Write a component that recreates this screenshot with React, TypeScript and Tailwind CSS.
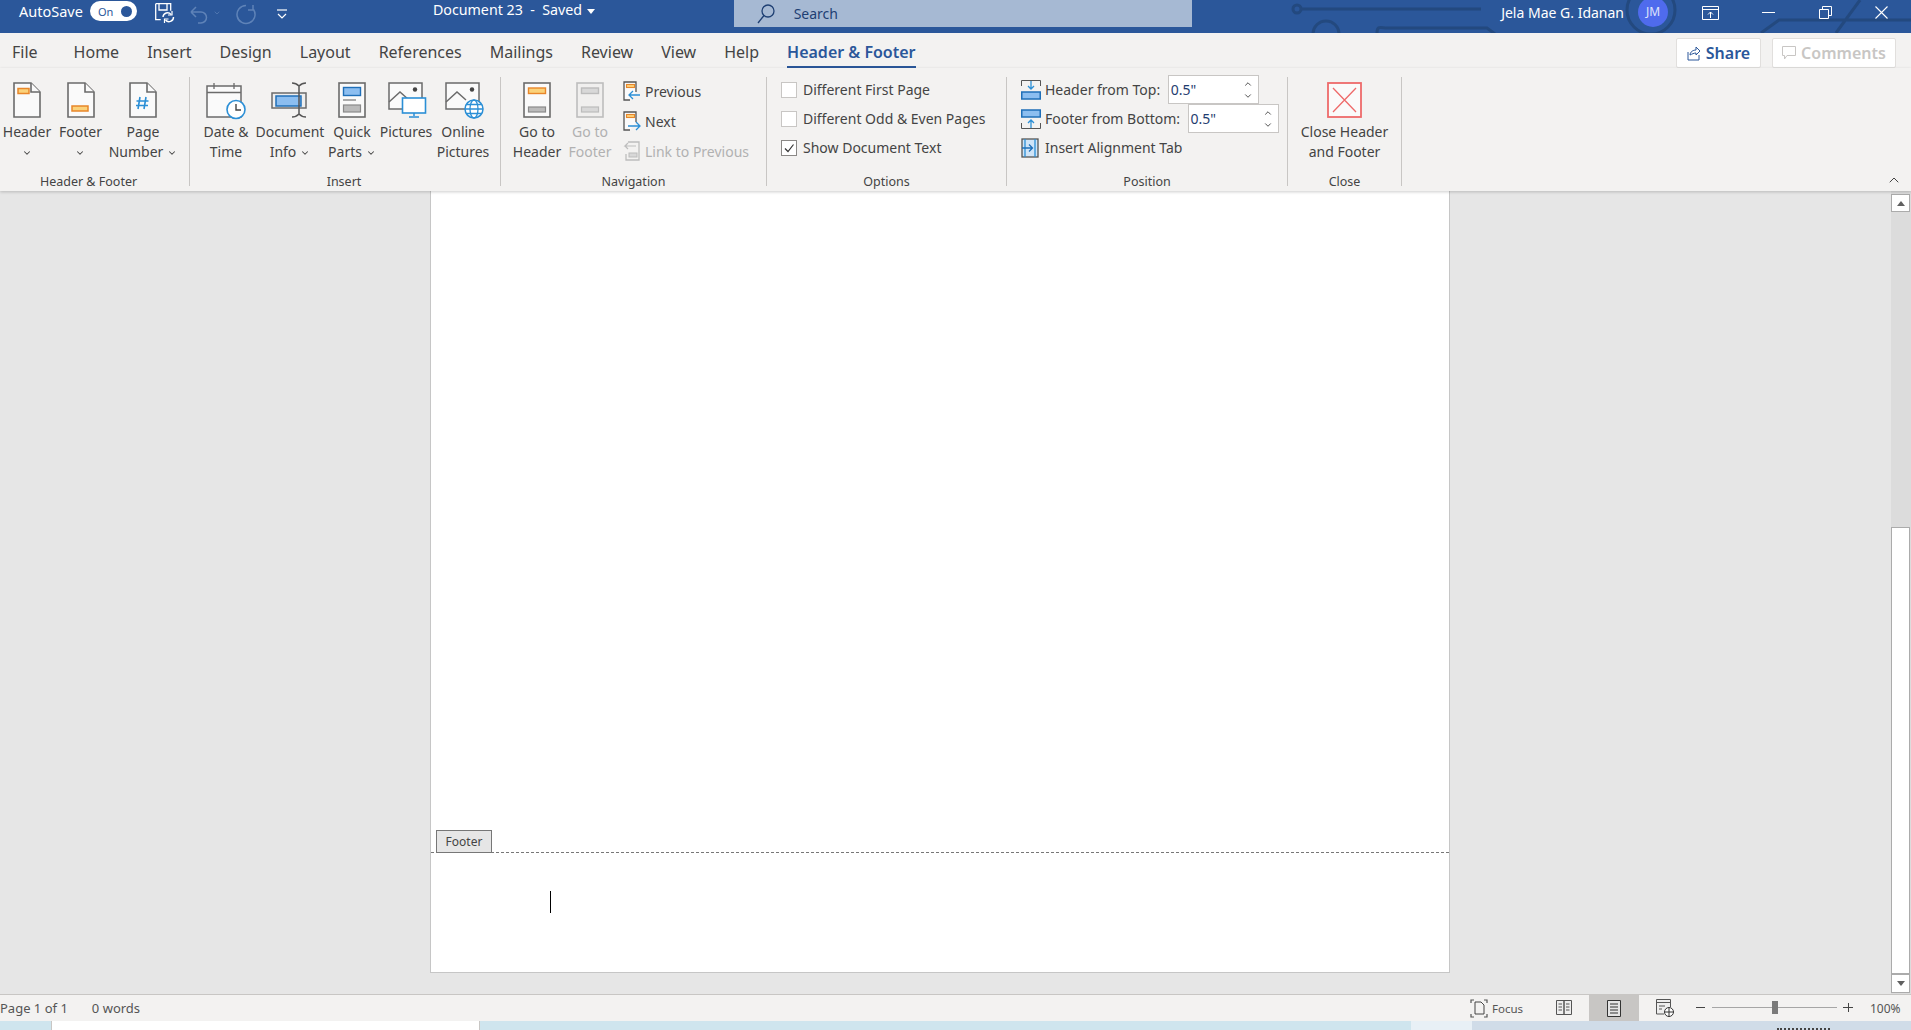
import type { ReactNode } from "react";
import { ChevronDown, ChevronUp } from "lucide-react";

const tabs = ["Home", "Insert", "Design", "Layout", "References", "Mailings", "Review", "View", "Help"];

function Chev({ className = "" }: { className?: string }) {
  return <ChevronDown className={`inline-block w-[10px] h-[10px] text-[#444] ${className}`} strokeWidth={2.5} />;
}

// page shaped icon with a folded corner
function PageIcon({ children }: { children?: ReactNode }) {
  return (
    <svg width="28" height="36" viewBox="0 0 28 36">
      <path d="M1 1h17l9 9v25H1z" fill="#fafafa" stroke="#6b6b6b" strokeWidth="1.6" />
      <path d="M18 1v9h9" fill="#fafafa" stroke="#6b6b6b" strokeWidth="1.6" />
      {children}
    </svg>
  );
}

function HeaderIcon() {
  return (
    <PageIcon>
      <rect x="5" y="6.5" width="11" height="5" fill="#fbd27a" stroke="#e8862a" strokeWidth="1.5" />
    </PageIcon>
  );
}

function FooterIcon() {
  return (
    <PageIcon>
      <rect x="5" y="24" width="16" height="5" fill="#fbd27a" stroke="#e8862a" strokeWidth="1.5" />
    </PageIcon>
  );
}

function NumberIcon() {
  return (
    <PageIcon>
      <path d="M11 15l-2 12M17 15l-2 12M7.5 19h12M7 23.5h12" stroke="#2b8fd6" strokeWidth="1.6" fill="none" />
    </PageIcon>
  );
}

function DateIcon() {
  return (
    <svg width="40" height="38" viewBox="0 0 40 38">
      <path d="M1 4h34v31H1z" fill="#fafafa" stroke="#6b6b6b" strokeWidth="1.5" />
      <path d="M1 10.5h34M8 1v6M28 1v6" stroke="#6b6b6b" strokeWidth="1.3" fill="none" />
      <circle cx="30" cy="27.5" r="9" fill="#fff" stroke="#2b8fd6" strokeWidth="1.6" />
      <path d="M30 22v6h5" stroke="#444" strokeWidth="1.4" fill="none" />
    </svg>
  );
}

function DocInfoIcon() {
  return (
    <svg width="38" height="36" viewBox="0 0 38 36">
      <rect x="1" y="11" width="34" height="15" fill="#eee" stroke="#6b6b6b" strokeWidth="1.5" />
      <rect x="5" y="14" width="25" height="10" fill="#8cbef0" stroke="#1f6fb8" strokeWidth="1.5" />
      <path d="M21 1c4 0 5 1 7 3 2-2 3-3 7-3M28 4v28M21 35c4 0 5-1 7-3 2 2 3 3 7 3" stroke="#555" strokeWidth="1.5" fill="#f3f2f1" />
    </svg>
  );
}

function QuickPartsIcon() {
  return (
    <svg width="28" height="36" viewBox="0 0 28 36">
      <rect x="1" y="1" width="26" height="34" fill="#fafafa" stroke="#6b6b6b" strokeWidth="1.6" />
      <rect x="5.5" y="5.5" width="17" height="8" fill="#8cbef0" stroke="#1f6fb8" strokeWidth="1.4" />
      <path d="M5 18h13" stroke="#888" strokeWidth="1.4" />
      <rect x="5.5" y="23" width="17" height="7" fill="#bbb" stroke="#8a8a8a" strokeWidth="1.2" />
    </svg>
  );
}

function PictureBase() {
  return (
    <>
      <path d="M1 1h33v26H1z" fill="#fafafa" stroke="#6b6b6b" strokeWidth="1.5" />
      <path d="M1 20l11-10 9 8" fill="none" stroke="#6b6b6b" strokeWidth="1.5" />
      <circle cx="27" cy="7.5" r="2.2" fill="#444" />
    </>
  );
}

function PicturesIcon() {
  return (
    <svg width="40" height="36" viewBox="0 0 40 36">
      <PictureBase />
      <rect x="14.5" y="16" width="23" height="15" fill="#fff" stroke="#2b8fd6" strokeWidth="1.6" />
      <path d="M26 31v3M21 35h10" stroke="#2b8fd6" strokeWidth="1.5" />
    </svg>
  );
}

function OnlineIcon() {
  return (
    <svg width="40" height="38" viewBox="0 0 40 38">
      <PictureBase />
      <circle cx="29" cy="27" r="9" fill="#fff" stroke="#2b8fd6" strokeWidth="1.5" />
      <ellipse cx="29" cy="27" rx="4" ry="9" fill="none" stroke="#2b8fd6" strokeWidth="1.3" />
      <path d="M20 27h18M21.5 22.5h15M21.5 31.5h15" stroke="#2b8fd6" strokeWidth="1.3" />
    </svg>
  );
}

function GoToIcon({ active }: { active: boolean }) {
  return (
    <svg width="28" height="36" viewBox="0 0 28 36">
      <rect x="1" y="1" width="26" height="34" fill={active ? "#fafafa" : "#f0efee"} stroke={active ? "#6b6b6b" : "#bdbdbd"} strokeWidth="1.6" />
      <rect x="5.5" y="6" width="17" height="5.5" fill={active ? "#fbd27a" : "#d8d8d8"} stroke={active ? "#e8862a" : "#bcbcbc"} strokeWidth="1.4" />
      <rect x="5.5" y="25" width="17" height="5" fill={active ? "#bbb" : "#d8d8d8"} stroke={active ? "#8a8a8a" : "#bcbcbc"} strokeWidth="1.2" />
    </svg>
  );
}

function NavIcon({ back }: { back?: boolean }) {
  return (
    <svg width="18" height="20" viewBox="0 0 18 20">
      <path d="M13 11V1H1v18h6" fill="#fafafa" stroke="#555" strokeWidth="1.3" />
      <rect x="3.5" y="3.5" width="8" height="3" fill="#fbd27a" stroke="#e8862a" strokeWidth="1.1" />
      {back ? (
        <path d="M17 14H6M10 10l-4 4 4 4" fill="none" stroke="#2b8fd6" strokeWidth="1.3" />
      ) : (
        <path d="M5 15h12M13 11l4 4-4 4" fill="none" stroke="#2b8fd6" strokeWidth="1.3" />
      )}
    </svg>
  );
}

function LinkIcon() {
  return (
    <svg width="18" height="20" viewBox="0 0 18 20">
      <path d="M5 1h11v18H3v-6" fill="none" stroke="#bdbdbd" strokeWidth="1.3" />
      <path d="M13 5H2l3-3M2 5l3 3" fill="none" stroke="#bdbdbd" strokeWidth="1.2" />
      <rect x="6" y="12" width="8" height="4" fill="#d8d8d8" stroke="#bcbcbc" />
    </svg>
  );
}

function PositionIcon({ kind }: { kind: "top" | "bottom" | "tab" }) {
  if (kind === "top") {
    return (
      <svg width="20" height="20" viewBox="0 0 20 20">
        <path d="M.5 6V.5h19V6" fill="none" stroke="#555" />
        <path d="M10 1v8M7 6l3 3 3-3" fill="none" stroke="#2b8fd6" strokeWidth="1.3" />
        <rect x=".75" y="12" width="18.5" height="7" fill="#8cbef0" stroke="#1f6fb8" strokeWidth="1.5" />
      </svg>
    );
  }
  if (kind === "bottom") {
    return (
      <svg width="20" height="20" viewBox="0 0 20 20">
        <rect x=".75" y="1" width="18.5" height="7" fill="#8cbef0" stroke="#1f6fb8" strokeWidth="1.5" />
        <path d="M.5 14v5.5h19V14" fill="none" stroke="#555" />
        <path d="M10 19v-8M7 14l3-3 3 3" fill="none" stroke="#2b8fd6" strokeWidth="1.3" />
      </svg>
    );
  }
  return (
    <svg width="18" height="20" viewBox="0 0 18 20">
      <rect x="1" y="1" width="16" height="18" fill="#cfe4f7" stroke="#555" strokeWidth="1.3" />
      <path d="M4 1v18M14 1v18" stroke="#2b8fd6" strokeWidth="1.3" />
      <path d="M1 10h10M8 6.5l3.5 3.5L8 13.500" fill="none" stroke="#1f6fb8" strokeWidth="1.3" />
    </svg>
  );
}

function BigButton({
  icon,
  lines,
  width,
  chevron,
  chevronBelow,
  disabled,
  iconShift = "",
}: {
  icon: ReactNode;
  lines: string[];
  width: string;
  chevron?: boolean;
  chevronBelow?: boolean;
  disabled?: boolean;
  iconShift?: string;
}) {
  return (
    <div className={`flex flex-col items-center shrink-0 ${width}`}>
      <div className={`h-[39px] pt-[2px] flex items-start justify-center ${iconShift}`}>{icon}</div>
      <div className={`mt-[3px] text-center leading-[20px] whitespace-nowrap ${disabled ? "text-[#b1b1b1]" : "text-[#444]"}`}>
        {lines.map((l, i) => (
          <div key={i}>
            {l}
            {chevron && i === lines.length - 1 && <Chev className="ml-1" />}
          </div>
        ))}
        {chevronBelow && <Chev />}
      </div>
    </div>
  );
}

function Group({
  label,
  width,
  className = "",
  labelClass = "",
  children,
}: {
  label: string;
  width: string;
  className?: string;
  labelClass?: string;
  children: ReactNode;
}) {
  return (
    <div className={`relative shrink-0 h-[109px] border-r border-[#c8c6c4] flex flex-col ${width}`}>
      <div className={`flex-1 flex ${className}`}>{children}</div>
      <div className={`text-center text-[12.5px] leading-[16px] text-[#444] -mb-[4px] ${labelClass}`}>{label}</div>
    </div>
  );
}

function SmallLink({ icon, label, disabled }: { icon: ReactNode; label: string; disabled?: boolean }) {
  return (
    <div className="flex items-center h-[30px]">
      <div className="w-[22px] flex justify-start">{icon}</div>
      <span className={disabled ? "text-[#b1b1b1]" : "text-[#444]"}>{label}</span>
    </div>
  );
}

function Option({ label, checked }: { label: string; checked?: boolean }) {
  return (
    <div className="flex items-center h-[29px]">
      <div className={`w-4 h-4 border flex items-center justify-center mr-[6px] bg-white ${checked ? "border-[#8a8886]" : "border-[#c8c6c4]"}`}>
        {checked && (
          <svg width="10" height="10" viewBox="0 0 10 10">
            <path d="M1 5.5l3 3 5.500-7" fill="none" stroke="#333" strokeWidth="1.2" />
          </svg>
        )}
      </div>
      <span className="text-[#444]">{label}</span>
    </div>
  );
}

function Spinner() {
  return (
    <div className="ml-[7.500px] w-[91px] h-[29px] bg-white border border-[#c8c6c4] flex items-center justify-between pl-[2px] pr-[5px]">
      <span className="text-[#1f3d6f]">0.5"</span>
      <div className="flex flex-col">
        <ChevronUp className="w-[10px] h-[10px] text-[#333]" strokeWidth={2} />
        <ChevronDown className="w-[10px] h-[10px] text-[#333] mt-[2px]" strokeWidth={2} />
      </div>
    </div>
  );
}

function TitleBar() {
  return (
    <div className="relative h-[33px] bg-[#2b579a] text-white flex items-start shrink-0 overflow-hidden">
      {/* circuit pattern behind the window controls */}
      <svg className="absolute right-0 top-0" width="630" height="33" viewBox="0 0 630 33">
        <g fill="none" stroke="#23497f" strokeWidth="3">
          <circle cx="16" cy="9" r="4" />
          <path d="M20 9h180" />
          <circle cx="45" cy="34" r="13" />
          <path d="M96 33c0-8 4-5 10-5h100l8 6" />
          <circle cx="370" cy="10" r="24" />
          <path d="M480 33l18-13h132M555 33l24-33" />
        </g>
      </svg>
      <span className="relative ml-[19px] text-[14.500px] leading-[22px]">AutoSave</span>
      <div className="relative ml-[7px] mt-[1px] w-[47px] h-[20px] rounded-full bg-white flex items-center justify-between pl-[8px] pr-[5px]">
        <span className="text-[11px] leading-none text-[#2b579a]">On</span>
        <span className="w-[11px] h-[11px] rounded-full bg-[#2b579a]" />
      </div>
      <svg className="relative ml-[18px] mt-[3px]" width="20" height="21" viewBox="0 0 20 21">
        <path d="M.7.7h15v7M.7.7v16h5M4 1v6h8V1M4 19" fill="none" stroke="#fff" strokeWidth="1.3" />
        <path d="M8 14a4.500 4.500 0 0 1 8-2.500M18.500 14a4.500 4.500 0 0 1-8 3" fill="none" stroke="#fff" strokeWidth="1.4" />
        <path d="M17 8v4h-4M9.500 20v-4h4" fill="none" stroke="#fff" strokeWidth="1.2" />
      </svg>
      <svg className="relative ml-[15px] mt-[5px]" width="18" height="19" viewBox="0 0 18 19">
        <path d="M1 7h10a5.500 5.500 0 0 1 0 11H8M1 7l5-5M1 7l5 5" fill="none" stroke="#5f83b8" strokeWidth="1.5" />
      </svg>
      <ChevronDown className="relative ml-[5px] mt-[9px] w-[8px] h-[8px] text-[#5f83b8]" strokeWidth={2} />
      <svg className="relative ml-[15px] mt-[4px]" width="20" height="21" viewBox="0 0 20 21">
        <path d="M10 1.500a9 9 0 1 1-7.500 4M3 1v5h5" fill="none" stroke="#5f83b8" strokeWidth="1.5" transform="matrix(-1 0 0 1 20 0)" />
      </svg>
      <svg className="relative ml-[21px] mt-[9px]" width="10" height="11" viewBox="0 0 10 11">
        <path d="M0 1h10" stroke="#fff" strokeWidth="1.200" />
        <path d="M1 5l4 4 4-4" fill="none" stroke="#fff" strokeWidth="1.200" />
      </svg>
      <span className="relative ml-[146px] text-[14.250px] leading-[20px] whitespace-pre">Document 23  -  Saved</span>
      <svg className="relative ml-[5px] mt-[9px]" width="8" height="5" viewBox="0 0 8 5">
        <path d="M0 0h8L4 5z" fill="#fff" />
      </svg>
      <div className="relative ml-[138.500px] w-[458px] h-[27px] bg-[#a6b9d3] flex items-center text-[#1e3f73]">
        <svg className="ml-[23px]" width="18" height="20" viewBox="0 0 18 20">
          <circle cx="11" cy="7" r="6" fill="none" stroke="#1e3f73" strokeWidth="1.300" />
          <path d="M7 11.500L1 19" stroke="#1e3f73" strokeWidth="1.300" />
        </svg>
        <span className="ml-[19px] text-[14px]">Search</span>
      </div>
      <span className="relative ml-[309.500px] text-[14px] leading-[25px] whitespace-nowrap">Jela Mae G. Idanan</span>
      <div className="absolute left-[1638px] top-[-3px] w-[30px] h-[30px] rounded-full bg-[#4f6bed] text-[#dfe4fb] text-[12px] flex items-center justify-center">JM</div>
      <svg className="absolute left-[1702px] top-[6px]" width="17" height="14" viewBox="0 0 17 14">
        <path d="M.5.500h16v13H.5zM.5 3.500h16" fill="none" stroke="#fff" />
        <path d="M8.500 12V6M6 8.500l2.500-2.500 2.500 2.500" fill="none" stroke="#fff" />
      </svg>
      <div className="absolute left-[1762px] top-[12px] w-[13px] h-[1px] bg-white" />
      <svg className="absolute left-[1819px] top-[6px]" width="13" height="13" viewBox="0 0 13 13">
        <path d="M.5 3.500h9v9h-9zM3.500 3.500v-3h9v9h-3" fill="none" stroke="#fff" />
      </svg>
      <svg className="absolute left-[1875px] top-[6px]" width="13" height="13" viewBox="0 0 13 13">
        <path d="M.5.500l12 12M12.500.500l-12 12" stroke="#fff" strokeWidth="1.100" />
      </svg>
    </div>
  );
}

function TabsRow() {
  return (
    <div className="relative h-[35px] flex items-start text-[16px] text-[#444] pl-[12px] pt-[8px] leading-[22px]">
      <span className="mr-[36px]">File</span>
      <div className="flex gap-[28px]">
        {tabs.map((t) => (
          <span key={t}>{t}</span>
        ))}
        <span className="relative font-semibold text-[#2b579a]">
          Header &amp; Footer
          <span className="absolute left-0 right-0 top-[25px] h-[4px] bg-[#2b579a]" />
        </span>
      </div>
      <div className="absolute left-[1676px] top-[5px] w-[85px] h-[30px] bg-white border border-[#e1dfdd] rounded-[2px] flex items-center justify-center font-semibold text-[#2b579a]">
        <svg className="mr-[5px]" width="14" height="15" viewBox="0 0 14 15">
          <path d="M1 6v8h11V9M3 9c0-3 3-5 6-5V1l4 4-4 4V7C7 7 5 8 3 9z" fill="none" stroke="#2b579a" />
        </svg>
        Share
      </div>
      <div className="absolute left-[1772px] top-[5px] w-[124px] h-[30px] bg-white border border-[#e1dfdd] rounded-[2px] flex items-center justify-center font-semibold text-[#c8c6c4]">
        <svg className="mr-[5px]" width="14" height="14" viewBox="0 0 14 14">
          <path d="M.5.500h13v9H5L2.500 13V9.500h-2z" fill="none" stroke="#c8c6c4" />
        </svg>
        Comments
      </div>
    </div>
  );
}

function Ribbon() {
  return (
    <div className="relative h-[123px] bg-[#f3f2f1] text-[14px] shadow-[0_1px_3px_rgba(0,0,0,0.2)] z-10 shrink-0">
      <div className="flex pt-[9px]">
        <Group label="Header & Footer" width="w-[190px]" className="pt-[3px]" labelClass="pr-[12px]">
          <BigButton icon={<HeaderIcon />} lines={["Header"]} width="w-[54px]" chevronBelow />
          <BigButton icon={<FooterIcon />} lines={["Footer"]} width="w-[53px]" chevronBelow />
          <BigButton icon={<NumberIcon />} lines={["Page", "Number"]} width="w-[72px]" chevron />
        </Group>
        <Group label="Insert" width="w-[311px]" className="pt-[3px] pl-[10px]" labelClass="pr-[2px]">
          <BigButton icon={<DateIcon />} lines={["Date &", "Time"]} width="w-[52px]" />
          <BigButton icon={<DocInfoIcon />} lines={["Document", "Info"]} width="w-[76px]" chevron />
          <BigButton icon={<QuickPartsIcon />} lines={["Quick", "Parts"]} width="w-[48px]" chevron />
          <BigButton icon={<PicturesIcon />} lines={["Pictures"]} width="w-[60px]" iconShift="pl-[4px]" />
          <BigButton icon={<OnlineIcon />} lines={["Online", "Pictures"]} width="w-[54px]" iconShift="pl-[4px]" />
        </Group>
        <Group label="Navigation" width="w-[266px]" className="pt-[3px] pl-[12px]">
          <BigButton icon={<GoToIcon active />} lines={["Go to", "Header"]} width="w-[48px]" />
          <BigButton icon={<GoToIcon active={false} />} lines={["Go to", "Footer"]} width="w-[58px]" disabled />
          <div className="ml-[4px] -mt-[4px]">
            <SmallLink icon={<NavIcon back />} label="Previous" />
            <SmallLink icon={<NavIcon />} label="Next" />
            <SmallLink icon={<LinkIcon />} label="Link to Previous" disabled />
          </div>
        </Group>
        <Group label="Options" width="w-[240px]" className="pl-[14px] flex-col -mt-[2px]">
          <Option label="Different First Page" />
          <Option label="Different Odd & Even Pages" />
          <Option label="Show Document Text" checked />
        </Group>
        <Group label="Position" width="w-[281px]" className="pl-[14px] flex-col -mt-[2px]">
          <div className="flex items-center h-[29px]">
            <PositionIcon kind="top" />
            <span className="ml-[4px] text-[#444]">Header from Top:</span>
            <Spinner />
          </div>
          <div className="flex items-center h-[29px]">
            <PositionIcon kind="bottom" />
            <span className="ml-[4px] text-[#444]">Footer from Bottom:</span>
            <Spinner />
          </div>
          <div className="flex items-center h-[29px]">
            <PositionIcon kind="tab" />
            <span className="ml-[6px] text-[#444]">Insert Alignment Tab</span>
          </div>
        </Group>
        <Group label="Close" width="w-[114px]" className="pt-[3px] justify-center">
          <BigButton
            icon={
              <svg width="35" height="36" viewBox="0 0 35 36">
                <rect x="1" y="1" width="33" height="34" fill="#fafafa" stroke="#ee6a6a" strokeWidth="1.800" />
                <path d="M6 6l23 24M29 6L6 30" stroke="#ee6a6a" strokeWidth="1.300" />
              </svg>
            }
            lines={["Close Header", "and Footer"]}
            width="w-[100px]"
          />
        </Group>
      </div>
      <ChevronUp className="absolute left-[1886px] top-[104px] w-4 h-4 text-[#444]" strokeWidth={1.500} />
    </div>
  );
}

function DocArea() {
  return (
    <div className="flex-1 flex bg-[#e6e6e6] min-h-0">
      <div className="flex-1">
        <div className="relative ml-[430px] w-[1020px] h-[782px] bg-white border-x border-b border-[#c6c6c6]">
          <div className="absolute left-0 right-0 top-[661px] border-t border-dashed border-[#777]" />
          <div className="absolute left-[5px] top-[639px] w-[56px] h-[23px] bg-[#e6e6e6] border border-[#777] text-[12px] text-[#444] flex items-center justify-center">
            Footer
          </div>
          <div className="absolute left-[119px] top-[700px] w-[1px] h-[22px] bg-black" />
        </div>
      </div>
      <div className="w-[20px] pt-[3px] bg-[#dcdcdc] flex flex-col">
        <div className="h-[18px] w-[19px] bg-white border border-[#ababab] flex items-center justify-center">
          <span className="w-0 h-0 border-x-[4px] border-x-transparent border-b-[5px] border-b-[#606060]" />
        </div>
        <div className="flex-1 flex flex-col justify-end">
          <div className="h-[447px] w-[19px] bg-white border border-[#ababab]" />
        </div>
        <div className="h-[19px] w-[19px] mb-[1px] bg-white border border-[#ababab] flex items-center justify-center">
          <span className="w-0 h-0 border-x-[4px] border-x-transparent border-t-[5px] border-t-[#606060]" />
        </div>
      </div>
    </div>
  );
}

function StatusBar() {
  return (
    <div className="relative h-[27px] bg-[#f3f2f1] border-t border-[#c8c6c4] text-[13px] text-[#555] flex items-center pt-[1px] shrink-0">
      <span>Page 1 of 1</span>
      <span className="ml-[24px]">0 words</span>
      <svg className="absolute left-[1470px] top-[4px]" width="18" height="19" viewBox="0 0 18 19">
        <path d="M1 4V1h3M14 1h3v3M1 15v3h3M17 15v3h-3" fill="none" stroke="#555" strokeWidth="1.200" />
        <path d="M5 3h6l3 3v9H5z" fill="none" stroke="#444" />
      </svg>
      <span className="absolute left-[1492px] top-[5px] text-[11.500px]">Focus</span>
      <svg className="absolute left-[1556px] top-[4px]" width="16" height="17" viewBox="0 0 16 17">
        <path d="M.5 1.500h7.500v14H.5zM8 1.500h7.500v14H8z" fill="#eee" stroke="#555" />
        <path d="M2.500 5h3.500M2.500 8h3.500M2.500 11h3.500M10 5h3.500M10 8h3.500M10 11h3.500" stroke="#555" />
      </svg>
      <div className="absolute left-[1589px] top-0 w-[50px] h-[26px] bg-[#c8c6c4] flex items-center justify-center">
        <svg width="14" height="17" viewBox="0 0 14 17">
          <path d="M.5.500h13v16H.5z" fill="#e4e4e4" stroke="#333" />
          <path d="M3 4h8M3 7h8M3 10h8M3 13h8" stroke="#333" />
        </svg>
      </div>
      <svg className="absolute left-[1656px] top-[4px]" width="18" height="18" viewBox="0 0 18 18">
        <path d="M8 15H.5V.500h14V8M.5 3.500h14" fill="#eee" stroke="#555" />
        <path d="M3 7h6M3 10h3" stroke="#555" />
        <circle cx="13" cy="13" r="4.500" fill="#fff" stroke="#333" />
        <path d="M8.500 13h9M13 8.500v9" stroke="#333" />
      </svg>
      <div className="absolute left-[1696px] top-[12px] w-[9px] h-[1px] bg-[#444]" />
      <div className="absolute left-[1712px] top-[12px] w-[125px] h-[1px] bg-[#a6a6a6]" />
      <div className="absolute left-[1772px] top-[6px] w-[6px] h-[13px] bg-[#7a7a7a]" />
      <div className="absolute left-[1843px] top-[12px] w-[10px] h-[1px] bg-[#444]" />
      <div className="absolute left-[1847.500px] top-[8px] w-[1px] h-[9px] bg-[#444]" />
      <span className="absolute left-[1870px] top-[5px] text-[12px]">100%</span>
    </div>
  );
}

export default function App() {
  return (
    <div className="w-[1911px] h-[1030px] flex flex-col overflow-hidden bg-[#f3f2f1] font-['Noto_Sans',sans-serif]">
      <TitleBar />
      <TabsRow />
      <Ribbon />
      <DocArea />
      <StatusBar />
      {/* bit of the desktop showing under the window */}
      <div className="relative h-[9px] shrink-0 bg-[#cfe5ee] flex">
        <div className="ml-[51px] w-[429px] bg-white border-x border-[#c8c6c4]" />
        <div className="absolute left-[1411px] top-0 w-[61px] h-[9px] bg-[#e8f0f6]" />
        <div className="absolute left-[1472px] right-0 top-0 h-[9px] bg-[#d0dce8]" />
        <div className="absolute left-[1777px] top-[7px] w-[53px] border-t-2 border-dotted border-[#444]" />
      </div>
    </div>
  );
}
